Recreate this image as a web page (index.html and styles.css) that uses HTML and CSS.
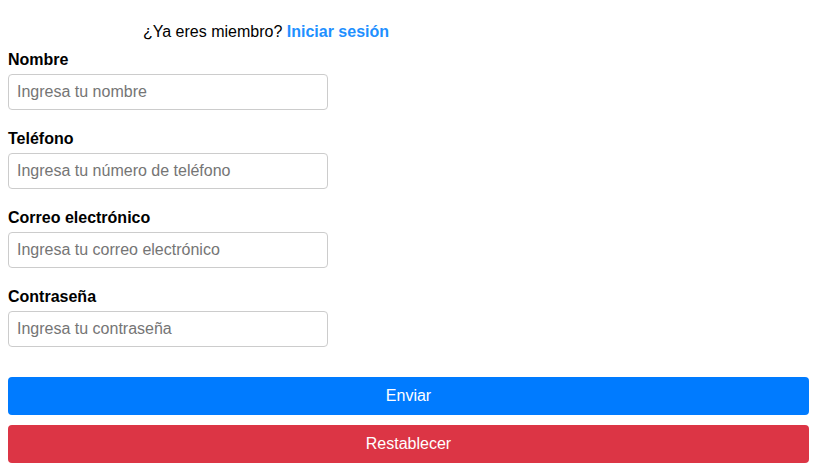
FILE: index.html
```html
<!DOCTYPE html>
<html lang="es">
<head>
<meta charset="utf-8">
<title>Registro</title>
<link rel="stylesheet" href="styles.css">
</head>
<body>
<form class="form">
  <p class="member">¿Ya eres miembro? <a href="#" class="login">Iniciar sesión</a></p>
  <div class="field">
    <label class="label" for="n">Nombre</label>
    <input class="input" id="n" type="text" placeholder="Ingresa tu nombre">
  </div>
  <div class="field">
    <label class="label" for="t">Teléfono</label>
    <input class="input" id="t" type="tel" placeholder="Ingresa tu número de teléfono">
  </div>
  <div class="field">
    <label class="label" for="c">Correo electrónico</label>
    <input class="input" id="c" type="email" placeholder="Ingresa tu correo electrónico">
  </div>
  <div class="field">
    <label class="label" for="p">Contraseña</label>
    <input class="input" id="p" type="password" placeholder="Ingresa tu contraseña">
  </div>
  <div class="actions">
    <button type="submit" class="btn btn-primary">Enviar</button>
    <button type="reset" class="btn btn-danger">Restablecer</button>
  </div>
</form>
</body>
</html>
```
FILE: styles.css
```css
* { box-sizing: border-box; }
html, body { margin: 0; background: #fff; }
body {
  padding: 8px;
  font-family: "Liberation Sans", Arial, sans-serif;
  font-size: 16px;
  line-height: 18px;
  color: #000;
}
.form { display: flex; flex-direction: column; }
.member {
  margin: 15px 0 10px 0;
  padding-left: 135px;
  font-size: 16px;
  line-height: 18px;
}
.login {
  color: #1e90ff;
  font-weight: bold;
  text-decoration: none;
}
.field {
  display: flex;
  flex-direction: column;
  align-items: flex-start;
  margin-bottom: 20px;
}
.label {
  font-weight: bold;
  margin-bottom: 5px;
  line-height: 18px;
}
.input {
  width: 320px;
  height: 36px;
  border: 1px solid #ccc;
  border-radius: 4px;
  padding: 0 8px;
  font-family: "Liberation Sans", Arial, sans-serif;
  font-size: 16px;
  color: #000;
}
.input::placeholder { color: #757575; }
.actions {
  display: flex;
  flex-direction: column;
  gap: 10px;
  margin-top: 10px;
}
.btn {
  width: 801px;
  height: 38px;
  border: none;
  border-radius: 4px;
  color: #fff;
  font-family: "Liberation Sans", Arial, sans-serif;
  font-size: 16px;
  cursor: pointer;
}
.btn-primary { background: #007bff; }
.btn-danger { background: #dc3545; }
```
